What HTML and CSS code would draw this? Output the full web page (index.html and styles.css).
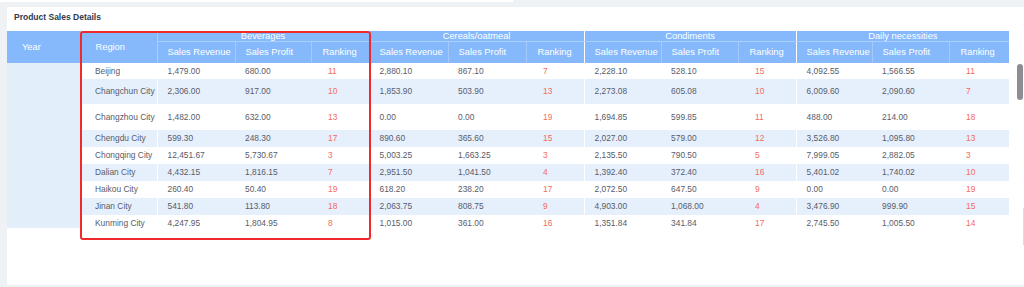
FILE: index.html
```html
<!DOCTYPE html>
<html lang="en">
<head>
  <meta charset="UTF-8" />
  <title>Product Sales Details</title>
  <link rel="stylesheet" href="styles.css">
</head>
<body>
  <div class="top-strip"></div>

  <div class="panel">
    <h3 class="panel-title">Product Sales Details</h3>

    <div class="table-wrap">
      <table class="sales">
        <colgroup>
          <col style="width:73px"><col style="width:77px">
          <col style="width:78px"><col style="width:76px"><col style="width:58px">
          <col style="width:79px"><col style="width:78px"><col style="width:58px">
          <col style="width:77px"><col style="width:77px"><col style="width:58px">
          <col style="width:76px"><col style="width:77px"><col style="width:60px">
        </colgroup>
        <thead>
          <tr class="group-row">
            <th rowspan="2" class="year-h">Year</th>
            <th rowspan="2" class="region-h">Region</th>
            <th colspan="3" class="group">Beverages</th>
            <th colspan="3" class="group">Cereals/oatmeal</th>
            <th colspan="3" class="group">Condiments</th>
            <th colspan="3" class="group">Daily necessities</th>
          </tr>
          <tr class="sub-row">
            <th>Sales Revenue</th><th>Sales Profit</th><th class="rank-h end">Ranking</th>
            <th>Sales Revenue</th><th>Sales Profit</th><th class="rank-h end">Ranking</th>
            <th>Sales Revenue</th><th>Sales Profit</th><th class="rank-h end">Ranking</th>
            <th>Sales Revenue</th><th>Sales Profit</th><th class="rank-h">Ranking</th>
          </tr>
        </thead>
        <tbody id="rows"></tbody>
      </table>
    </div>

    <div class="red-box"></div>
    <div class="scroll-thumb"></div>
    <div class="scroll-line"></div>
  </div>

  <script>
    const rows = [
      ["Beijing", 16, "1,479.00", "680.00", 11, "2,880.10", "867.10", 7, "2,228.10", "528.10", 15, "4,092.55", "1,566.55", 11],
      ["Changchun City", 25, "2,306.00", "917.00", 10, "1,853.90", "503.90", 13, "2,273.08", "605.08", 10, "6,009.60", "2,090.60", 7],
      ["Changzhou City", 26, "1,482.00", "632.00", 13, "0.00", "0.00", 19, "1,694.85", "599.85", 11, "488.00", "214.00", 18],
      ["Chengdu City", 17, "599.30", "248.30", 17, "890.60", "365.60", 15, "2,027.00", "579.00", 12, "3,526.80", "1,095.80", 13],
      ["Chongqing City", 17, "12,451.67", "5,730.67", 3, "5,003.25", "1,663.25", 3, "2,135.50", "790.50", 5, "7,999.05", "2,882.05", 3],
      ["Dalian City", 17, "4,432.15", "1,816.15", 7, "2,951.50", "1,041.50", 4, "1,392.40", "372.40", 16, "5,401.02", "1,740.02", 10],
      ["Haikou City", 17, "260.40", "50.40", 19, "618.20", "238.20", 17, "2,072.50", "647.50", 9, "0.00", "0.00", 19],
      ["Jinan City", 17, "541.80", "113.80", 18, "2,063.75", "808.75", 9, "4,903.00", "1,068.00", 4, "3,476.90", "999.90", 15],
      ["Kunming City", 17, "4,247.95", "1,804.95", 8, "1,015.00", "361.00", 16, "1,351.84", "341.84", 17, "2,745.50", "1,005.50", 14]
    ];

    const tbody = document.getElementById('rows');

    rows.forEach((r, i) => {
      const tr = document.createElement('tr');
      tr.style.height = r[1] + 'px';
      if (i % 2 === 1) tr.className = 'stripe';

      if (i === 0) {
        const year = document.createElement('td');
        year.rowSpan = rows.length;
        year.className = 'year-cell';
        tr.appendChild(year);
      }

      const region = document.createElement('td');
      region.className = 'region end';
      region.textContent = r[0];
      tr.appendChild(region);

      for (let g = 0; g < 4; g++) {
        const base = 2 + g * 3;
        const rev = document.createElement('td');
        rev.textContent = r[base];
        const profit = document.createElement('td');
        profit.textContent = r[base + 1];
        const rank = document.createElement('td');
        rank.className = 'rank' + (g < 3 ? ' end' : '');
        rank.textContent = r[base + 2];
        tr.append(rev, profit, rank);
      }

      tbody.appendChild(tr);
    });
  </script>
</body>
</html>
```

FILE: styles.css
```css
body {
  margin: 0;
  background: #eef2f5;
  font-family: 'Liberation Sans', Arial, sans-serif;
  height: 287px;
  overflow: hidden;
}

.top-strip {
  width: 513px;
  height: 2px;
  background: #fff;
}

.panel {
  position: relative;
  margin: 5px 0 0 7px;
  height: 278px;
  background: #fff;
}

.panel-title {
  margin: 0;
  padding-left: 7px;
  height: 24px;
  line-height: 21px;
  font-size: 8.5px;
  font-weight: bold;
  color: #303a4a;
}

.table-wrap {
  height: 197px;
  overflow: hidden;
}

.sales {
  table-layout: fixed;
  width: 1002px;
  border-collapse: collapse;
  border-spacing: 0;
}

.sales th {
  background: #86b9fb;
  color: #fff;
  font-weight: normal;
  font-size: 9.3px;
  text-align: left;
  padding: 0 0 0 10px;
  white-space: nowrap;
  overflow: hidden;
  border-right: 1px solid #a4cafc;
}

.group-row {
  height: 10px;
}

.group-row th.group {
  text-align: center;
  padding: 0;
  line-height: 10px;
  border-right: 1px solid #fff;
  border-bottom: 1px solid #a9cdfd;
}

.group-row th:last-child {
  border-right: 0;
}

.sub-row {
  height: 21px;
}

.sales th.year-h {
  padding-left: 15px;
  padding-top: 1px;
}

.sales th.region-h {
  padding-left: 15px;
  padding-top: 1px;
  border-right: 1px solid #a9cdfd;
}

.sales th.rank-h {
  padding-left: 11px;
}

.sales th.end {
  border-right: 1px solid #fff;
}

.sub-row th:last-child {
  border-right: 0;
}

.sales td {
  font-size: 8.4px;
  color: #585c6a;
  padding: 0 0 0 10px;
  white-space: nowrap;
  overflow: hidden;
}

.sales td.year-cell {
  background: #e3eefb;
  vertical-align: top;
}

.sales td.region {
  padding-left: 15px;
}

.sales td.end {
  border-right: 1px solid #fff;
}

.sales td.rank {
  color: #f56a5a;
  padding-left: 17px;
}

.stripe td {
  background: #e6f0fd;
}

.red-box {
  position: absolute;
  left: 73px;
  top: 24px;
  width: 287px;
  height: 205px;
  border: 2px solid #ee2a2a;
  border-radius: 3px;
}

.scroll-thumb {
  position: absolute;
  left: 1010px;
  top: 57px;
  width: 6px;
  height: 36px;
  border-radius: 3px;
  background: #8c8d95;
}

.scroll-line {
  position: absolute;
  left: 1016px;
  top: 201px;
  width: 1px;
  height: 37px;
  background: #dcdcdc;
}
```
